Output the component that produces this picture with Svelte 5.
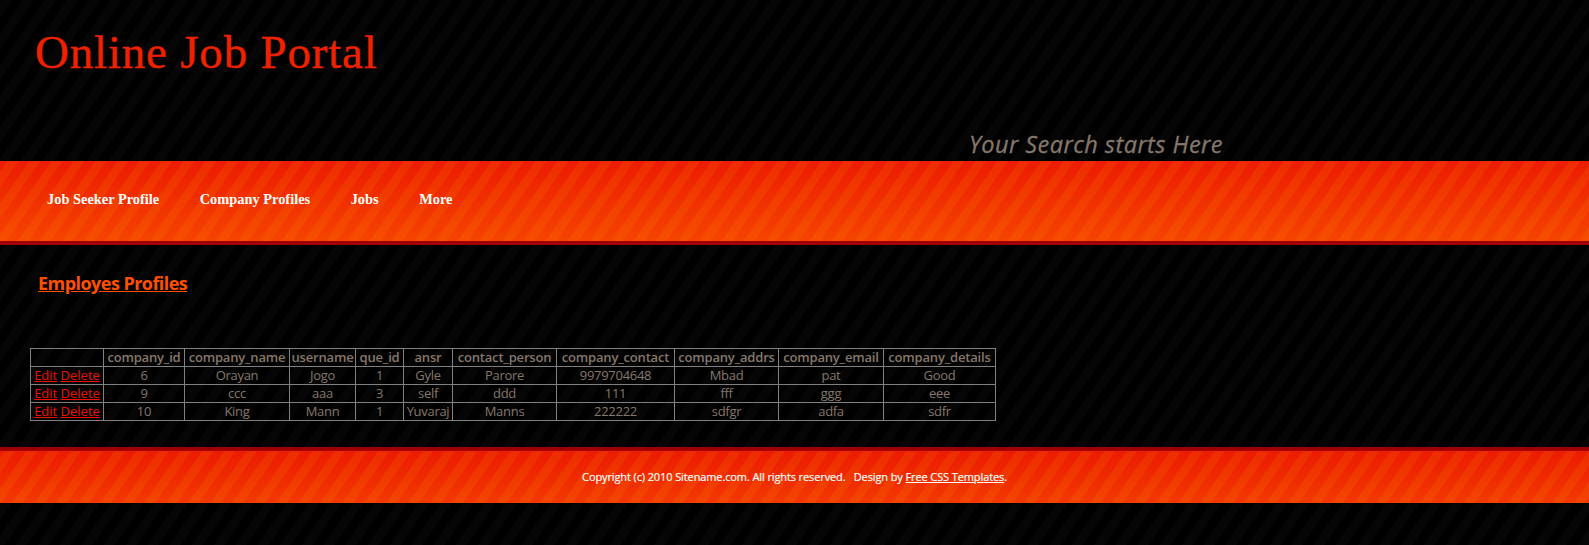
<script>
  const nav = ['Job Seeker Profile', 'Company Profiles', 'Jobs', 'More'];
  const columns = [
    { name: 'company_id', width: 81 },
    { name: 'company_name', width: 105 },
    { name: 'username', width: 66 },
    { name: 'que_id', width: 48 },
    { name: 'ansr', width: 49 },
    { name: 'contact_person', width: 104 },
    { name: 'company_contact', width: 118 },
    { name: 'company_addrs', width: 104 },
    { name: 'company_email', width: 105 },
    { name: 'company_details', width: 112 }
  ];
  const rows = [
    ['6', 'Orayan', 'Jogo', '1', 'Gyle', 'Parore', '9979704648', 'Mbad', 'pat', 'Good'],
    ['9', 'ccc', 'aaa', '3', 'self', 'ddd', '111', 'fff', 'ggg', 'eee'],
    ['10', 'King', 'Mann', '1', 'Yuvaraj', 'Manns', '222222', 'sdfgr', 'adfa', 'sdfr']
  ];
</script>

<div class="page">
  <header>
    <h1>Online Job Portal</h1>
    <p class="slogan">Your Search starts Here</p>
  </header>
  <nav>
    {#each nav as item}
      <a href="#top">{item}</a>
    {/each}
  </nav>
  <main>
    <h2>Employes Profiles</h2>
    <table>
      <colgroup>
        <col style="width: 73px" />
        {#each columns as c}<col style="width: {c.width}px" />{/each}
      </colgroup>
      <thead>
        <tr>
          <th></th>
          {#each columns as c}<th>{c.name}</th>{/each}
        </tr>
      </thead>
      <tbody>
        {#each rows as row}
          <tr>
            <td class="actions"><a href="#top">Edit</a> <a href="#top">Delete</a></td>
            {#each row as cell}<td>{cell}</td>{/each}
          </tr>
        {/each}
      </tbody>
    </table>
  </main>
  <footer>
    <p>Copyright (c) 2010 Sitename.com. All rights reserved. &nbsp; Design by <a href="#top">Free CSS Templates</a>.</p>
  </footer>
</div>

<style>
  :global(body) {
    margin: 0;
    background: #000;
  }
  .page {
    height: 545px;
    overflow: hidden;
    display: flex;
    flex-direction: column;
    font-family: 'Trebuchet MS', 'Open Sans', sans-serif;
    font-size: 13px;
    color: #85776b;
    background: repeating-linear-gradient(125deg, #000 0 0.8px, #060606 1.2px 9.6px, #000 10px 18.02px);
  }
  header {
    height: 161px;
    flex: none;
    display: flex;
    flex-direction: column;
    justify-content: space-between;
  }
  h1 {
    margin: 25px 0 0 35px;
    font: 400 47px/54px Georgia, 'Liberation Serif', serif;
    letter-spacing: 0.8px;
    -webkit-text-stroke: 0.4px #ee2200;
    color: #ee2200;
    white-space: nowrap;
  }
  .slogan {
    margin: 0 0 1px 969px;
    font-size: 23.5px;
    line-height: 32px;
    font-style: italic;
    font-weight: 500;
    letter-spacing: 0.45px;
    -webkit-text-stroke: 0.3px #85776b;
    white-space: nowrap;
  }
  nav {
    box-sizing: border-box;
    height: 84px;
    flex: none;
    display: flex;
    gap: 40.5px;
    padding: 28px 0 0 47px;
    border-bottom: 4px solid #a00000;
    font: 700 14.4px/20px Georgia, 'Liberation Serif', serif;
    background:
      repeating-linear-gradient(125deg, transparent 0 6px, rgba(255, 160, 0, 0.12) 6.5px 14.8px, transparent 15.3px 18.02px),
      linear-gradient(#ec1b00, #f54400);
  }
  nav a {
    color: #fff;
    text-decoration: none;
    white-space: nowrap;
  }
  main {
    height: 202px;
    flex: none;
  }
  h2 {
    margin: 25px 0 0 38px;
    font-size: 18px;
    line-height: 26px;
    font-weight: 700;
    letter-spacing: -0.54px;
    color: #ff5000;
    text-decoration: underline;
  }
  table {
    margin: 52px 0 0 30px;
    width: 966px;
    table-layout: fixed;
    border-collapse: collapse;
    line-height: 17px;
  }
  th,
  td {
    padding: 0;
    height: 17px;
    border: 1px solid #808080;
    text-align: center;
    white-space: nowrap;
    letter-spacing: -0.3px;
  }
  th {
    font-weight: 600;
    letter-spacing: -0.18px;
  }
  td.actions {
    letter-spacing: 0;
  }
  td a {
    color: #ee1100;
  }
  footer {
    box-sizing: border-box;
    height: 56px;
    flex: none;
    border-top: 4px solid #a00000;
    color: #fff;
    text-align: center;
    background:
      repeating-linear-gradient(125deg, transparent 0 3.5px, rgba(255, 160, 0, 0.12) 4px 12.3px, transparent 12.8px 18.02px),
      linear-gradient(#ec1b00, #f23900);
  }
  footer p {
    margin: 17px 0 0;
    font-size: 11px;
    line-height: 18px;
    font-weight: 500;
    letter-spacing: -0.11px;
    -webkit-text-stroke: 0.2px #fff;
  }
  footer a {
    color: #fff;
  }
</style>
